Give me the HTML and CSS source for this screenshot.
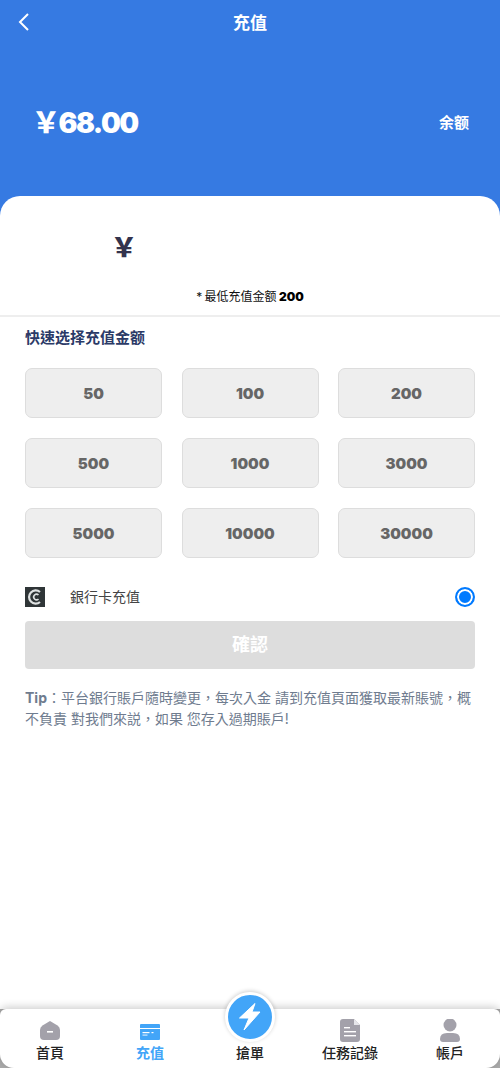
FILE: index.html
```html
<!DOCTYPE html>
<html>
<head>
  <meta charset="utf-8">
  <title>充值</title>
  <link rel="stylesheet" href="styles.css">
</head>
<body>
  <div class="page">
    <div class="hero">
      <div class="topbar">
        <svg class="back" width="14" height="18" viewBox="0 0 14 18"><path d="M11 1 L3 9 L11 17" fill="none" stroke="#fff" stroke-width="2"/></svg>
        <span class="topbar-title">充值</span>
      </div>
      <div class="balance">
        <span class="balance-num">￥68.00</span>
        <span class="balance-label">余额</span>
      </div>
    </div>

    <div class="panel">
      <div class="amount-input">￥</div>
      <div class="min-note">* 最低充值金额 <b>200</b></div>
      <div class="section">
        <div class="section-title">快速选择充值金额</div>
        <div class="amount-grid">
          <div class="amount">50</div>
          <div class="amount">100</div>
          <div class="amount">200</div>
          <div class="amount">500</div>
          <div class="amount">1000</div>
          <div class="amount">3000</div>
          <div class="amount">5000</div>
          <div class="amount">10000</div>
          <div class="amount">30000</div>
        </div>
        <div class="pay-row">
          <svg class="pay-icon" width="20" height="20" viewBox="0 0 20 20">
            <rect width="20" height="20" fill="#2f3537"/>
            <path d="M15 5 A6.6 6.6 0 1 0 15 15" fill="none" stroke="#dfe2e2" stroke-width="2.2"/>
            <path d="M13.5 8 A2.8 2.8 0 1 0 13.5 12" fill="none" stroke="#dfe2e2" stroke-width="1.6"/>
          </svg>
          <span class="pay-name">銀行卡充值</span>
          <span class="radio"></span>
        </div>
        <div class="confirm">確認</div>
        <p class="tip"><b>Tip</b>：平台銀行賬戶隨時變更，每次入金 請到充值頁面獲取最新賬號，概不負責 對我們來説，如果 您存入過期賬戶!</p>
      </div>
    </div>

    <div class="tabbar">
      <div class="tab">
        <svg width="20" height="23" viewBox="0 -2 20 23"><path d="M10 0 L17.5 4.5 Q20 6 20 9 V15 Q20 19 16 19 H4 Q0 19 0 15 V9 Q0 6 2.5 4.5 Z" fill="#a3a1aa"/><rect x="7" y="10" width="6" height="1.6" fill="#fff"/></svg>
        <span>首頁</span>
      </div>
      <div class="tab active">
        <svg width="20" height="23" viewBox="0 -5 20 23"><path d="M1 0 H19 Q20 0 20 1 V4 H0 V1 Q0 0 1 0 Z M0 5 H20 V15 Q20 16 19 16 H1 Q0 16 0 15 Z" fill="#42a5f8"/><rect x="2.5" y="8" width="7" height="1.2" fill="#fff"/><rect x="11.5" y="8" width="2" height="1.2" fill="#fff"/><rect x="2.5" y="10.5" width="5" height="1.2" fill="#cfe8fd"/></svg>
        <span>充值</span>
      </div>
      <div class="tab">
        <div class="tab-bolt">
          <svg width="24" height="30" viewBox="0 0 24 30"><path d="M17 1.5 L1.5 16 H11 L6 28 L22 10 H14 Z" fill="#fff" stroke="#fff" stroke-width="1" stroke-linejoin="round"/></svg>
        </div>
        <span>搶單</span>
      </div>
      <div class="tab">
        <svg width="20" height="23" viewBox="0 0 20 23"><path d="M3 0 H14 L20 6 V20 Q20 23 17 23 H3 Q0 23 0 20 V3 Q0 0 3 0 Z" fill="#a3a1aa"/><path d="M14 0 L20 6 H14 Z" fill="#e6e6ea"/><rect x="4" y="8" width="6" height="1.4" fill="#fff"/><rect x="4" y="12" width="12" height="1.4" fill="#fff"/><rect x="4" y="16" width="12" height="1.4" fill="#fff"/></svg>
        <span>任務記錄</span>
      </div>
      <div class="tab">
        <svg width="20" height="23" viewBox="0 0 20 23"><circle cx="10" cy="6" r="6.5" fill="#a3a1aa"/><path d="M0 20 Q0 14 7 14 H13 Q20 14 20 20 Q20 23 17 23 H3 Q0 23 0 20 Z" fill="#a3a1aa"/></svg>
        <span>帳戶</span>
      </div>
    </div>
  </div>
</body>
</html>
```

FILE: styles.css
```css
body {
  margin: 0;
  font-family: Inter, "Noto Sans CJK TC", sans-serif;
  background-color: #fff;
}

.page {
  display: flex;
  flex-direction: column;
  height: 1068px;
  overflow: hidden;
  background-color: #aaa;
}

.hero {
  height: 216px;
  flex-shrink: 0;
  background-color: #367ae2;
  color: #fff;
}

.topbar {
  display: flex;
  align-items: center;
  justify-content: center;
  position: relative;
  height: 42px;
}

.back {
  position: absolute;
  left: 17px;
  top: 13px;
}

.topbar-title {
  font-size: 17px;
  font-weight: 700;
}

.balance {
  display: flex;
  align-items: center;
  justify-content: space-between;
  padding: 59px 31px 0 32px;
}

.balance-num {
  font-size: 28px;
  font-weight: 900;
  letter-spacing: -1.5px;
}

.balance-label {
  font-size: 15px;
  font-weight: 700;
}

.panel {
  flex: 1;
  margin-top: -20px;
  background-color: #fff;
  border-radius: 20px 20px 0 0;
  position: relative;
}

.amount-input {
  height: 84px;
  padding: 32px 0 0 111px;
  box-sizing: border-box;
  font-size: 26px;
  font-weight: 800;
  line-height: 40px;
  color: #33334d;
}

.min-note {
  height: 35px;
  text-align: center;
  font-size: 12px;
  line-height: 33px;
  word-spacing: -1px;
  color: #111;
  border-bottom: 2px solid #eee;
}

.min-note b {
  font-weight: 900;
  color: #000;
}

.section {
  padding: 0 25px;
}

.section-title {
  margin-top: 11px;
  font-size: 15px;
  font-weight: 700;
  line-height: 20px;
  color: #2b3a67;
}

.amount-grid {
  display: grid;
  grid-template-columns: repeat(3, 1fr);
  column-gap: 19.5px;
  row-gap: 20px;
  margin-top: 20px;
}

.amount {
  height: 50px;
  box-sizing: border-box;
  display: flex;
  align-items: center;
  justify-content: center;
  background-color: #eee;
  border: 1px solid #ddd;
  border-radius: 7px;
  font-size: 15px;
  font-weight: 900;
  color: #666;
}

.pay-row {
  display: flex;
  align-items: center;
  height: 20px;
  margin-top: 29px;
}

.pay-name {
  flex: 1;
  margin-left: 25px;
  font-size: 14px;
  line-height: 20px;
  color: #444;
}

.radio {
  width: 20px;
  height: 20px;
  box-sizing: border-box;
  border: 2px solid #007aff;
  border-radius: 50%;
  background-color: #007aff;
  box-shadow: inset 0 0 0 2px #fff;
}

.confirm {
  height: 48px;
  margin-top: 14px;
  background-color: #ddd;
  border-radius: 4px;
  text-align: center;
  font-size: 18px;
  font-weight: 700;
  line-height: 48px;
  color: #fff;
}

.tip {
  margin: 18px 0 0;
  font-size: 14px;
  line-height: 21px;
  color: #6f7c8f;
}

.tabbar {
  display: flex;
  height: 59px;
  flex-shrink: 0;
  position: relative;
  background-color: #fff;
  border-radius: 6px 6px 14px 14px;
  box-shadow: 0 -2px 8px rgba(0, 0, 0, 0.2);
}

.tab {
  flex: 1;
  display: flex;
  flex-direction: column;
  align-items: center;
  justify-content: flex-end;
  position: relative;
  padding-bottom: 5px;
  font-size: 14px;
  font-weight: 500;
  line-height: 20px;
  color: #222;
}

.tab.active {
  color: #42a5f8;
  font-weight: 700;
}

.tab svg {
  margin-bottom: 1px;
}

.tab-bolt {
  position: absolute;
  top: -17px;
  left: 50%;
  margin-left: -25px;
  width: 44px;
  height: 44px;
  display: flex;
  align-items: center;
  justify-content: center;
  background-color: #42a5f8;
  border: 3px solid #fff;
  border-radius: 50%;
  box-shadow: 0 -1px 4px rgba(0, 0, 0, 0.2);
}
```
